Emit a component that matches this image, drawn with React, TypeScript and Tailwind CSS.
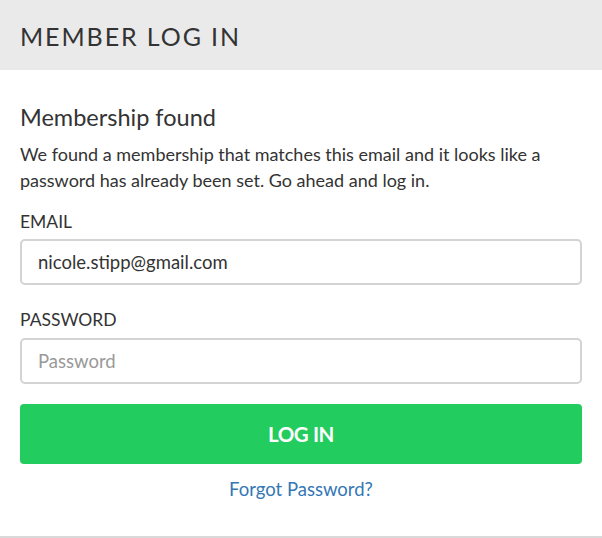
import React from 'react';

const App = () => {
  return (
    <div className="w-[602px] h-[538px] bg-white font-['Lato',sans-serif] text-[#333] flex flex-col overflow-hidden">
      {/* Header band */}
      <div className="h-[70px] shrink-0 bg-[#eaeaea] px-5 flex items-center">
        <h1 className="text-[25px] leading-none tracking-[1.9px] text-[#333] pt-[2px]">MEMBER LOG IN</h1>
      </div>

      {/* Form body */}
      <div className="flex-1 px-5 pt-[34px] border-b-2 border-[#d9d9d9]">
        <h2 className="text-[23.5px] leading-[26px]">Membership found</h2>
        <p className="mt-[11px] text-[18px] leading-[26px]">
          We found a membership that matches this email and it looks like a password has already been set. Go ahead and log in.
        </p>

        <label className="block mt-[18px] text-[17.5px] leading-[22px]">EMAIL</label>
        <input
          type="email"
          defaultValue="nicole.stipp@gmail.com"
          className="mt-[6px] w-full h-[46px] px-4 border-2 border-[#d3d3d3] rounded-[5px] text-[18.5px] text-[#333] outline-none"
        />

        <label className="block mt-[24px] text-[17.5px] leading-[22px]">PASSWORD</label>
        <input
          type="password"
          placeholder="Password"
          className="mt-[7px] w-full h-[46px] px-4 border-2 border-[#d3d3d3] rounded-[5px] text-[18.5px] placeholder:text-[#999] outline-none"
        />

        <button className="mt-[20px] w-full h-[60px] bg-[#22cc5e] rounded-[4px] text-white font-bold text-[20.5px] tracking-[-0.02em]">
          LOG IN
        </button>

        <div className="mt-[12px] text-center">
          <a href="#" className="text-[18.5px] text-[#3477b5]">Forgot Password?</a>
        </div>
      </div>
    </div>
  );
};

export default App;
